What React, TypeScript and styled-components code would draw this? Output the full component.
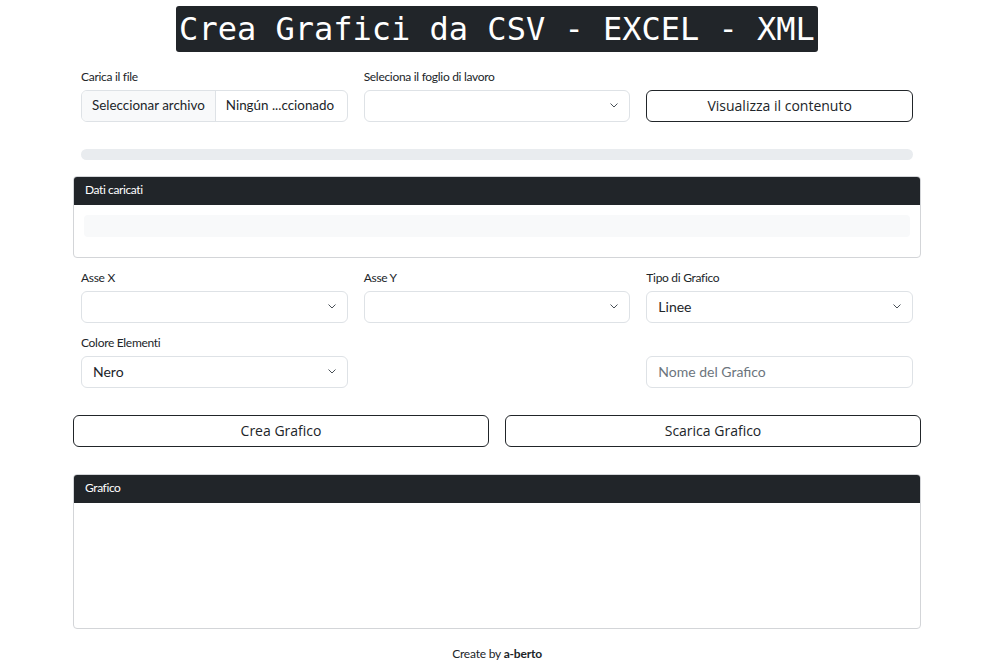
import React from "react";
import styled, { createGlobalStyle } from "styled-components";

const Global = createGlobalStyle`
  * { box-sizing: border-box; }
  body { margin: 0; background: #fff; font-family: Lato, "Liberation Sans", sans-serif; color: #212529; }
`;

const Page = styled.div`
  width: 848px;
  margin-left: 73px;
  padding-top: 6px;
`;

const TitleWrap = styled.div`
  display: flex;
  justify-content: center;
`;

const Title = styled.h1`
  margin: 0;
  background: #212529;
  color: #fff;
  font-family: "DejaVu Sans Mono", monospace;
  font-weight: 400;
  font-size: 32px;
  line-height: 38px;
  padding: 4px 3px;
  border-radius: 3px;
`;

const Grid = styled.div<{ $top?: number }>`
  display: grid;
  grid-template-columns: repeat(3, minmax(0, 1fr));
  column-gap: 16px;
  padding: 0 8px;
  margin-top: ${(p) => p.$top ?? 0}px;
`;

const Field = styled.div`
  display: flex;
  flex-direction: column;
  justify-content: flex-end;
  min-width: 0;
`;

const Label = styled.label`
  font-size: 12px;
  line-height: 14px;
  margin-bottom: 6px;
  letter-spacing: -0.3px;
`;

const FileBox = styled.div`
  display: flex;
  height: 32px;
  border: 1px solid #dee2e6;
  border-radius: 6px;
  overflow: hidden;
  font-size: 13.4px;
  white-space: nowrap;
`;

const FileBtn = styled.span`
  background: #f8f9fa;
  border-right: 1px solid #dee2e6;
  padding: 0 10px 2px;
  display: flex;
  align-items: center;
`;

const FileName = styled.span`
  padding: 0 10px 2px;
  display: flex;
  align-items: center;
`;

const SelectBox = styled.div`
  height: 32px;
  border: 1px solid #dee2e6;
  border-radius: 6px;
  display: flex;
  align-items: center;
  justify-content: space-between;
  padding: 0 11px 2px 11px;
  font-size: 14px;
`;

const Input = styled.div`
  height: 32px;
  border: 1px solid #dee2e6;
  border-radius: 6px;
  display: flex;
  align-items: center;
  padding: 0 11px 2px;
  font-size: 14px;
  color: #6c757d;
`;

const OutlineBtn = styled.button`
  height: 32px;
  width: 100%;
  background: #fff;
  border: 1px solid #212529;
  border-radius: 6px;
  font-family: "Open Sans", sans-serif;
  font-size: 14px;
  color: #212529;
  padding: 0 0 2px;
`;

const Progress = styled.div`
  margin: 27px 8px 0;
  height: 11px;
  background: #e9ecef;
  border-radius: 6px;
`;

const Card = styled.div<{ $top: number; $h: number }>`
  margin-top: ${(p) => p.$top}px;
  height: ${(p) => p.$h}px;
  border: 1px solid #d3d5d8;
  border-radius: 4px;
  overflow: hidden;
`;

const CardHeader = styled.div`
  background: #212529;
  color: #fff;
  height: 28px;
  font-size: 12px;
  letter-spacing: -0.4px;
  display: flex;
  align-items: center;
  padding: 0 11px 3px;
`;

const CardBody = styled.div`
  padding: 10px;
`;

const Placeholder = styled.div`
  height: 22px;
  background: #f8f9fa;
  border-radius: 4px;
`;

const BtnRow = styled.div`
  display: grid;
  grid-template-columns: 1fr 1fr;
  gap: 16px;
  margin-top: 27px;
`;

const Footer = styled.div`
  text-align: center;
  font-size: 12px;
  margin-top: 17px;
  letter-spacing: -0.2px;
  b { font-weight: 700; }
`;

const Chevron = () => (
  <svg width="8" height="5" viewBox="0 0 8 5" fill="none">
    <path d="M0.8 0.8l3.2 3.2 3.2-3.2" stroke="#495057" strokeWidth="1" strokeLinecap="round" strokeLinejoin="round" />
  </svg>
);

const Select = ({ value }: { value?: string }) => (
  <SelectBox>
    <span>{value ?? ""}</span>
    <Chevron />
  </SelectBox>
);

export default function App() {
  return (
    <>
      <Global />
      <Page>
        <TitleWrap>
          <Title>Crea Grafici da CSV - EXCEL - XML</Title>
        </TitleWrap>
        <Grid $top={18}>
          <Field>
            <Label>Carica il file</Label>
            <FileBox>
              <FileBtn>Seleccionar archivo</FileBtn>
              <FileName>Ningún ...ccionado</FileName>
            </FileBox>
          </Field>
          <Field>
            <Label>Seleciona il foglio di lavoro</Label>
            <Select />
          </Field>
          <Field>
            <OutlineBtn>Visualizza il contenuto</OutlineBtn>
          </Field>
        </Grid>
        <Progress />
        <Card $top={16} $h={82}>
          <CardHeader>Dati caricati</CardHeader>
          <CardBody>
            <Placeholder />
          </CardBody>
        </Card>
        <Grid $top={13}>
          <Field>
            <Label>Asse X</Label>
            <Select />
          </Field>
          <Field>
            <Label>Asse Y</Label>
            <Select />
          </Field>
          <Field>
            <Label>Tipo di Grafico</Label>
            <Select value="Linee" />
          </Field>
        </Grid>
        <Grid $top={13}>
          <Field>
            <Label>Colore Elementi</Label>
            <Select value="Nero" />
          </Field>
          <div />
          <Field>
            <Input>Nome del Grafico</Input>
          </Field>
        </Grid>
        <BtnRow>
          <OutlineBtn>Crea Grafico</OutlineBtn>
          <OutlineBtn>Scarica Grafico</OutlineBtn>
        </BtnRow>
        <Card $top={27} $h={155}>
          <CardHeader>Grafico</CardHeader>
        </Card>
        <Footer>
          Create by <b>a-berto</b>
        </Footer>
      </Page>
    </>
  );
}
